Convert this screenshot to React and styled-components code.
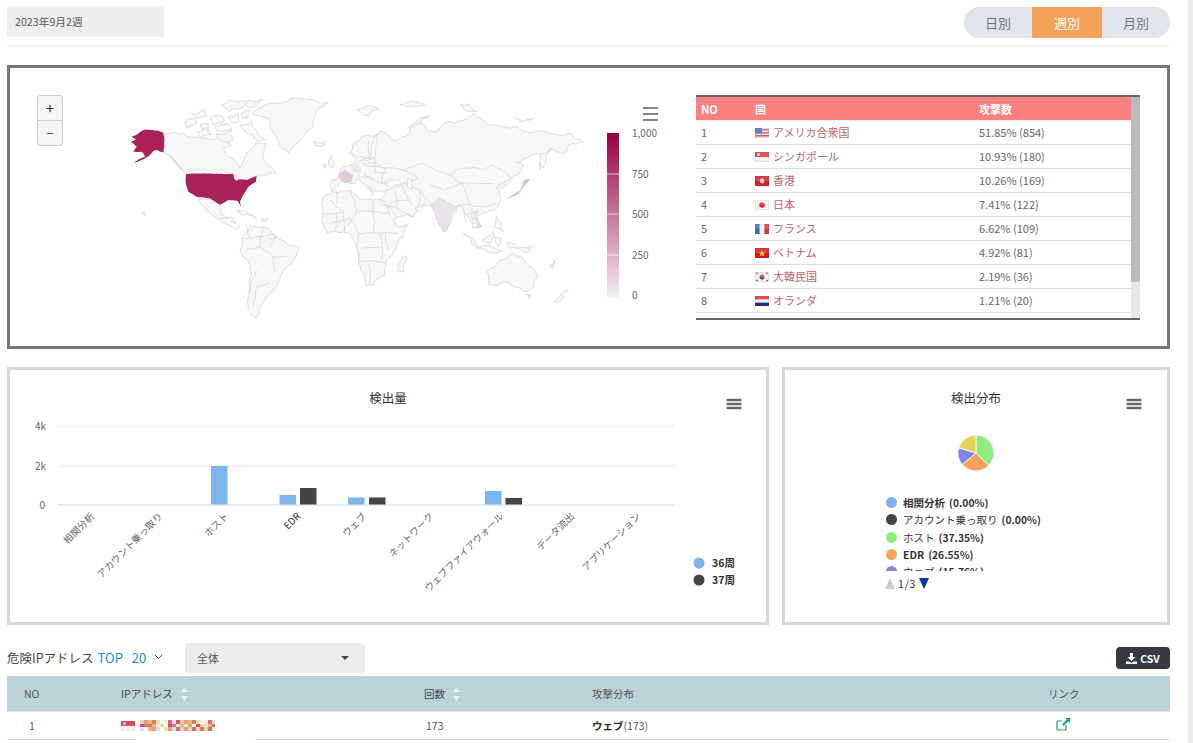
import React from "react";
import styled, { createGlobalStyle } from "styled-components";

const GlobalStyle = createGlobalStyle`
  html, body {
    margin: 0;
    padding: 0;
    background: #fff;
    overflow: hidden;
    font-family: "Noto Sans CJK JP", "Noto Sans", sans-serif;
    color: #555;
  }
`;

const Page = styled.div`
  display: flex;
  width: 1193px;
  height: 743px;
  overflow: hidden;
`;
const Main = styled.div`
  width: 1163px;
  padding: 7px 18px 0 7px;
  flex: none;
`;
const PageScroll = styled.div`
  width: 5px;
  background: #ececec;
`;

const TopBar = styled.div`
  display: flex;
  justify-content: space-between;
  align-items: flex-start;
  height: 39px;
  border-bottom: 1px solid #eee;
  margin-bottom: 18px;
`;
const DateBox = styled.div`
  width: 149px;
  height: 30px;
  padding-left: 8px;
  background: #eee;
  font-size: 10.7px;
  line-height: 30px;
  color: #555;
`;
const Segments = styled.div`
  display: flex;
  height: 31px;
  width: 206px;
  border-radius: 16px;
  overflow: hidden;
  background: #e0e5ec;
`;
const Segment = styled.div`
  flex: ${(p) => p.$grow};
  text-align: center;
  font-size: 13px;
  line-height: 32px;
  background: ${(p) => (p.$active ? "#f4a25a" : "transparent")};
  color: ${(p) => (p.$active ? "#fff" : "#6c757d")};
`;

const MapPanel = styled.section`
  position: relative;
  box-sizing: border-box;
  height: 284px;
  border: 3px solid #777;
  display: flex;
  justify-content: flex-end;
  padding: 27px 27px 0 0;
  margin-bottom: 18px;
`;
const MapCanvas = styled.svg`
  position: absolute;
  left: -10px;
  top: -68px;
  width: 680px;
  height: 400px;
  pointer-events: none;
`;
const ZoomGroup = styled.div`
  position: absolute;
  left: 27px;
  top: 27px;
  width: 24px;
  border: 1px solid #ccc;
  border-radius: 3px;
  background: #f5f5f5;
`;
const ZoomButton = styled.div`
  height: 24px;
  line-height: 24px;
  text-align: center;
  font-size: ${(p) => p.$size}px;
  color: #333;
  & + & {
    border-top: 1px solid #ccc;
  }
`;
const TableBox = styled.div`
  position: relative;
  width: 444px;
  height: 225px;
  box-sizing: border-box;
  border-top: 2px solid #666;
  border-bottom: 2px solid #666;
  overflow: hidden;
`;
const TableInner = styled.div`
  width: 435px;
`;
const CountryHead = styled.div`
  display: grid;
  grid-template-columns: 54px 224px 1fr;
  height: 23px;
  line-height: 24px;
  padding-left: 5px;
  background: #fd8080;
  border-bottom: 1px solid #eee;
  color: #fff;
  font-size: 11px;
  font-weight: 700;
`;
const CountryRow = styled.div`
  display: grid;
  grid-template-columns: 54px 224px 1fr;
  height: 23px;
  line-height: 23px;
  padding-left: 5px;
  border-bottom: 1px solid #ddd;
  font-size: 11px;
  color: #666;
`;
const CountryName = styled.div`
  display: flex;
  align-items: center;
  gap: 4px;
  color: #c0646c;
`;
const Thumb = styled.div`
  position: absolute;
  right: 0;
  top: 0;
  bottom: 0;
  width: 9px;
  background: linear-gradient(#bbb 0 83.5%, #e8e8e8 83.5% 100%);
`;

const ChartRow = styled.div`
  display: grid;
  grid-template-columns: 762px 388px;
  gap: 13px;
  margin-bottom: 18px;
`;
const ChartPanel = styled.section`
  position: relative;
  box-sizing: border-box;
  height: 258px;
  border: 3px solid #d8d8d8;
  overflow: hidden;
`;
const ChartTitle = styled.h3`
  margin: 0;
  padding-top: 18px;
  text-align: center;
  font-size: 12.5px;
  line-height: 20px;
  font-weight: 400;
  color: #333;
`;
const MenuIcon = styled.svg`
  position: absolute;
  top: ${(p) => p.$top}px;
  right: ${(p) => p.$right}px;
  width: 16px;
  height: 12px;
`;
const BarSvg = styled.svg`
  position: absolute;
  left: 0;
  top: 0;
  width: 756px;
  height: 252px;
`;
const PieSvg = styled.svg`
  display: block;
  margin: 26px auto 0;
  width: 38px;
  height: 38px;
`;
const PieLegend = styled.div`
  margin: 22px 0 0 101px;
  height: 77px;
  overflow: hidden;
`;
const PieItem = styled.div`
  display: flex;
  align-items: center;
  gap: 6px;
  height: 17.3px;
  font-size: 10.3px;
  font-weight: 700;
  color: #333;
  white-space: nowrap;
`;
const Dot = styled.span`
  width: 11px;
  height: 11px;
  border-radius: 50%;
  background: ${(p) => p.$color};
`;
const ItemName = styled.span`
  font-size: 10.5px;
  font-weight: ${(p) => (p.$thin ? 400 : 700)};
  margin-right: 4px;
`;
const Pager = styled.div`
  display: flex;
  align-items: center;
  gap: 3px;
  margin: 5px 0 0 100px;
  font-size: 10.5px;
  letter-spacing: 0.8px;
  color: #333;
`;
const Tri = styled.span`
  width: 0;
  height: 0;
  border-left: 5.5px solid transparent;
  border-right: 5.5px solid transparent;
  border-${(p) => (p.$down ? "top" : "bottom")}: 11px solid ${(p) => p.$color};
`;

const IpHeader = styled.div`
  display: flex;
  align-items: center;
  height: 30px;
  margin-bottom: 3px;
`;
const IpTitle = styled.div`
  font-size: 12.5px;
  color: #444;
  width: 178px;
  display: flex;
  align-items: center;
  white-space: nowrap;
  padding-bottom: 2px;
  box-sizing: border-box;
`;
const Top = styled.span`
  color: #1a8ccc;
  margin-left: 4px;
  word-spacing: 6px;
  font-size: 13px;
`;
const Select = styled.div`
  display: flex;
  justify-content: space-between;
  align-items: center;
  box-sizing: border-box;
  width: 180px;
  height: 30px;
  padding: 0 16px 0 12px;
  border-radius: 4px;
  background: #ebecee;
  font-size: 11px;
  color: #555;
`;
const CsvButton = styled.div`
  display: flex;
  align-items: center;
  justify-content: center;
  gap: 3px;
  margin-left: auto;
  width: 54px;
  height: 22px;
  border-radius: 4px;
  background: #343a40;
  color: #fff;
  font-size: 10.5px;
  font-weight: 700;
`;
const IpGrid = styled.div`
  position: relative;
  box-sizing: border-box;
  display: grid;
  grid-template-columns: 114px 303px 168px 456px 1fr;
  align-items: center;
  height: ${(p) => p.$h}px;
  background: ${(p) => p.$bg || "transparent"};
  border-bottom: 1px solid ${(p) => p.$line};
  font-size: 10.5px;
  color: #555;
`;
const NoCell = styled.div`
  padding-left: ${(p) => p.$pad}px;
`;
const SortCell = styled.div`
  display: flex;
  align-items: center;
  gap: 8px;
  color: #444;
`;
const IpCell = styled.div`
  display: flex;
  align-items: center;
  gap: 5px;
`;
const Bold = styled.b`
  color: #222;
`;
const Mask = styled.div`
  position: absolute;
  left: 129px;
  bottom: -1px;
  width: 119px;
  height: 2px;
  background: #fff;
`;

// breaks straight polygon edges into irregular coastlines, same result every render
const wobble = (seed) => {
  const v = Math.sin(seed * 12.9898) * 43758.5453;
  return v - Math.floor(v) - 0.5;
};
const rough = (d, amp = 0.3) =>
  d
    .match(/M[^M]*/g)
    .map((sub) => {
      const nums = sub.match(/-?\d+(\.\d+)?/g).map(Number);
      const pts = [];
      for (let i = 0; i < nums.length; i += 2) pts.push([nums[i], nums[i + 1]]);
      const closed = /Z/.test(sub);
      if (closed) pts.push(pts[0]);
      const out = [pts[0]];
      const split = (a, b) => {
        const dx = b[0] - a[0];
        const dy = b[1] - a[1];
        const len = Math.hypot(dx, dy);
        if (len < 7) {
          out.push(b);
          return;
        }
        const n = wobble(a[0] * 3.1 + b[1] * 7.7 + a[1] + b[0] * 0.3) * amp;
        const mid = [(a[0] + b[0]) / 2 - dy * n, (a[1] + b[1]) / 2 + dx * n];
        split(a, mid);
        split(mid, b);
      };
      for (let i = 1; i < pts.length; i++) split(pts[i - 1], pts[i]);
      return "M" + out.map((p) => `${p[0].toFixed(1)} ${p[1].toFixed(1)}`).join("L") + (closed ? "Z" : "");
    })
    .join("");

/* world map, drawn in two local frames read off the screenshot at 3x */
const ALASKA =
  "M95 140L130 120L190 128L190 187L170 180L160 183L150 195L125 210L90 228L135 200L125 185L100 185L110 170L92 155L108 148Z";
const USA =
  "M258 252L400 252L403 266L410 272L418 268L440 270L470 258L468 275L445 290L430 315L420 335L423 350L412 332L385 330L360 345L330 325L290 320L265 305L257 280Z";
const LAND_WEST = [
  "M190 128L250 130L300 145L330 150L370 150L395 165L370 175L385 200L420 235L435 200L450 180L470 155L495 160L490 210L530 250L500 255L470 258L440 270L415 268L400 252L258 252L240 230L210 195L190 187Z",
  "M455 70L510 40L570 25L640 30L685 38L650 60L640 110L600 150L565 190L540 170L520 130L510 90L460 75Z",
  "M640 155L675 155L670 168L645 168Z",
  "M255 95L285 85L290 100L262 115Z",
  "M275 70L312 60L322 80L290 84Z",
  "M365 45L400 30L440 35L425 55L390 65Z",
  "M445 30L490 28L460 52L440 50Z",
  "M330 85L365 78L372 95L340 105Z",
  "M345 110L385 100L395 125L350 122Z",
  "M385 80L415 72L418 95L395 98Z",
  "M420 105L455 95L495 150L470 150L440 130Z",
  "M290 125L325 118L335 135L300 140Z",
  "M350 130L385 128L400 150L360 150Z",
  "M300 105L325 100L325 115L305 117Z",
  "M425 70L450 62L445 82L428 85Z",
  "M290 320L330 325L360 345L365 375L395 380L420 410L410 420L385 405L345 380L310 350L295 325Z",
  "M425 445L450 405L490 410L530 440L595 470L590 495L550 540L530 590L490 640L470 685L450 670L445 610L455 550L420 480Z",
  "M410 362L450 372L470 385L430 375Z",
  "M485 385L505 385L500 395L485 393Z",
  "M128 365L138 372L135 377Z",
  "M500 435L530 437L525 445L505 445Z",
];
const WEST_BORDERS =
  "M440 405L450 445L425 445M490 410L480 470L440 480M480 470L520 500L525 545M470 540L445 610M520 430L525 445M510 580L470 590M355 385L385 385M392 395L410 400M450 445L490 440M530 440L510 470M520 500L560 500M470 590L460 650";
const LAND_EAST = [
  "M60 190L95 140L150 122L185 150L200 150L240 130L235 110L285 80L300 78L270 95L290 120L320 125L360 95L430 70L470 100L560 110L640 125L720 130L760 155L715 165L700 195L660 175L630 240L640 200L620 190L560 215L580 225L565 255L530 285L500 295L515 330L500 355L450 375L440 385L455 410L430 415L410 375L385 345L350 420L340 425L305 345L265 360L250 380L175 395L150 340L170 300L115 290L130 315L110 290L85 265L75 280L40 275L5 305L0 280L30 250L30 240L60 225L80 210Z",
  "M-25 345L-20 320L10 305L60 300L85 320L130 330L165 335L185 370L205 410L235 405L205 450L190 490L170 510L165 555L130 585L105 585L95 545L85 515L80 470L60 430L20 425L-10 430L-25 395Z",
  "M220 497L230 500L222 545L205 545L207 520Z",
  "M470 545L510 510L545 490L575 500L590 520L622 555L610 590L590 605L555 590L530 575L480 585Z",
  "M590 612L603 615L598 626Z",
  "M672 635L700 605L715 600L690 635Z",
  "M80 60L125 45L145 55L115 78Z",
  "M240 115L265 85L300 78L270 95Z",
  "M-5 220L5 195L15 225L5 235Z",
  "M-25 225L-12 222L-15 235Z",
  "M400 430L445 475L425 462Z",
  "M440 475L520 482L480 488Z",
  "M455 450L490 425L480 460Z",
  "M495 440L515 445L505 470Z",
  "M500 380L520 425L495 410Z",
  "M530 460L610 465L590 490L540 475Z",
  "M630 195L665 175L640 235Z",
  "M390 45L415 42L440 65L410 62Z",
  "M210 45L285 42L240 50Z",
  "M555 85L610 85L580 95Z",
  "M660 530L675 510L670 535Z",
];
// inland seas cut out of the land mass
const SEAS = [
  "M118 205L125 165L145 130L138 170L135 200Z",
  "M95 212L135 205L130 218L100 222Z",
  "M165 282L205 270L215 285L178 292Z",
  "M232 265L245 270L246 300L233 292Z",
  "M255 355L285 340L268 362Z",
  "M180 345L200 385L190 388L175 360Z",
];
const EAST_BORDERS =
  "M60 190L120 205L115 150M115 205L165 235L155 280M120 260L155 280L215 285M85 260L120 260M100 225L165 235M165 235L220 240L265 265L220 280L270 300L305 345M220 240L275 220L360 255L390 235L460 240L490 225L545 265L500 290M360 255L395 280L490 280M300 285L340 300L395 280L420 345L470 350L500 340M270 300L265 350M385 345L420 345M150 340L250 380M215 285L245 345M60 300L80 365L130 365L130 330M80 365L40 420M130 365L190 370M130 365L130 430L85 430L85 515M130 430L205 430M150 430L155 510M85 515L165 520M115 520L120 585M0 330L40 365M-20 370L40 365M425 355L430 395L455 410M20 300L20 340M135 205L135 250M90 230L85 260M100 250L130 270M130 245L175 250M155 280L190 265M85 215L130 200M170 300L215 285M180 340L235 330M195 300L200 350M0 400L60 385M20 370L15 425M165 430L175 480M100 475L155 470M60 385L85 430M40 365L45 430M410 375L445 360M395 345L410 400";
const JAPAN = "M533 325L572 300L582 270L600 266L580 292L566 312Z";
const INDIA = "M305 345L330 325L375 350L390 345L365 370L350 420L340 425L320 385Z";
const FRANCE = "M25 250L45 240L70 255L65 275L45 280L30 270Z";
const GERMANY = "M60 225L85 220L95 245L70 250Z";
const VIETNAM = "M430 365L447 365L432 385L455 408L440 415L445 395Z";

const WorldMap = () => (
  <MapCanvas viewBox="0 0 680 400">
    <defs>
      <linearGradient id="ramp" x1="0" y1="0" x2="0" y2="1">
        <stop offset="0" stopColor="#99003f" />
        <stop offset="1" stopColor="#f3eef5" />
      </linearGradient>
    </defs>
    <g transform="translate(100 90) scale(0.3333)" stroke="#d6d6d6" fill="#f7f7f7">
      {LAND_WEST.map((d) => (
        <path key={d} d={rough(d)} strokeWidth="2.6" />
      ))}
      <path d={rough(WEST_BORDERS, 0.14)} fill="none" strokeWidth="2.4" />
      <path d={rough(ALASKA, 0.12)} fill="#a8215a" stroke="none" />
      <path d={rough(USA, 0.04)} fill="#a8215a" stroke="none" />
      <path d="M205 188L240 235L250 248L228 215Z" fill="#c4c4c4" stroke="none" />
    </g>
    <g transform="translate(330 90) scale(0.3333)" stroke="#d6d6d6" fill="#f7f7f7">
      {LAND_EAST.map((d) => (
        <path key={d} d={rough(d)} strokeWidth="2.6" />
      ))}
      <path d={rough(EAST_BORDERS, 0.14)} fill="none" strokeWidth="2.4" />
      {SEAS.map((d) => (
        <path key={d} d={rough(d, 0.2)} fill="#fff" strokeWidth="2.4" />
      ))}
      <path d={rough(INDIA, 0.1)} fill="#eae3ed" strokeWidth="2.4" />
      <path d={rough(FRANCE, 0.1)} fill="#e3cbdc" stroke="none" />
      <path d={rough(GERMANY, 0.1)} fill="#eee8f1" stroke="none" />
      <path d={rough(VIETNAM, 0.1)} fill="#e9dfe9" strokeWidth="2" />
      <path d={rough(JAPAN, 0.1)} fill="#e0c0cf" strokeWidth="2" />
    </g>
    <rect x="607" y="133" width="12" height="164" fill="url(#ramp)" />
    {[174, 214, 255].map((y) => (
      <line key={y} x1="607" x2="619" y1={y} y2={y} stroke="#fff" strokeOpacity="0.7" />
    ))}
    <g fontSize="10" fill="#666" fontFamily="'Noto Sans CJK JP', sans-serif">
      <text x="632" y="137">1,000</text>
      <text x="632" y="178">750</text>
      <text x="632" y="218">500</text>
      <text x="632" y="259">250</text>
      <text x="632" y="299">0</text>
    </g>
    <g stroke="#666" strokeWidth="1.6">
      <line x1="643" x2="658" y1="108" y2="108" />
      <line x1="643" x2="658" y1="114" y2="114" />
      <line x1="643" x2="658" y1="120" y2="120" />
    </g>
  </MapCanvas>
);

const FLAGS = {
  us: (
    <>
      <rect width="14" height="10" fill="#e6e6ee" />
      {[1, 4, 7].map((y) => (
        <rect key={y} y={y} width="14" height="1.5" fill="#d0605a" />
      ))}
      <rect width="7" height="5.5" fill="#4a6fb5" />
    </>
  ),
  sg: (
    <>
      <rect width="14" height="10" fill="#f2f2f2" />
      <rect width="14" height="5" fill="#e5303a" />
      <circle cx="3.5" cy="2.5" r="1.5" fill="#fbdede" />
    </>
  ),
  hk: (
    <>
      <rect width="14" height="10" fill="#d81e26" />
      <circle cx="7" cy="5" r="2.4" fill="#f6c6c6" />
    </>
  ),
  jp: (
    <>
      <rect width="14" height="10" fill="#f5f5f5" />
      <circle cx="7" cy="5" r="2.8" fill="#e8262c" />
    </>
  ),
  fr: (
    <>
      <rect width="14" height="10" fill="#f2f2f2" />
      <rect width="4.6" height="10" fill="#4668b4" />
      <rect x="9.4" width="4.6" height="10" fill="#e3343a" />
    </>
  ),
  vn: (
    <>
      <rect width="14" height="10" fill="#e0141c" />
      <polygon points="7,2 8,4.4 10.4,4.4 8.5,6 9.2,8.3 7,7 4.8,8.3 5.5,6 3.6,4.4 6,4.4" fill="#f8d830" />
    </>
  ),
  kr: (
    <>
      <rect width="14" height="10" fill="#eeeeee" />
      <circle cx="7" cy="5" r="2.4" fill="#d6404a" />
      <path d="M4.6 5a2.4 2.4 0 0 0 4.8 0z" fill="#3b55a0" />
      <path d="M1 2l2-1.2M1 8l2 1.2M13 2l-2-1.2M13 8l-2 1.2" stroke="#444" strokeWidth="1" />
    </>
  ),
  nl: (
    <>
      <rect width="14" height="10" fill="#f2f2f2" />
      <rect width="14" height="3.4" fill="#d8343c" />
      <rect y="6.6" width="14" height="3.4" fill="#1c3578" />
    </>
  ),
};

const Flag = ({ code }) => (
  <svg width="14" height="10" viewBox="0 0 14 10">
    {FLAGS[code]}
    <rect width="14" height="5" fill="#fff" opacity="0.14" />
    <rect x="0.25" y="0.25" width="13.5" height="9.5" fill="none" stroke="#000" strokeOpacity="0.12" strokeWidth="0.5" />
  </svg>
);

const COUNTRIES = [
  ["us", "アメリカ合衆国", "51.85% (854)"],
  ["sg", "シンガポール", "10.93% (180)"],
  ["hk", "香港", "10.26% (169)"],
  ["jp", "日本", "7.41% (122)"],
  ["fr", "フランス", "6.62% (109)"],
  ["vn", "ベトナム", "4.92% (81)"],
  ["kr", "大韓民国", "2.19% (36)"],
  ["nl", "オランダ", "1.21% (20)"],
];

const BARS = [
  [211, 466, "#7cb5ec"],
  [279.5, 495, "#7cb5ec"],
  [300, 488, "#434348"],
  [348, 497.5, "#7cb5ec"],
  [369, 497.5, "#434348"],
  [485, 491, "#7cb5ec"],
  [505.5, 498, "#434348"],
];
const AXIS_LABELS = [
  ["相関分析", 95],
  ["アカウント乗っ取り", 163],
  ["ホスト", 229],
  ["EDR", 301],
  ["ウェブ", 367],
  ["ネットワーク", 434],
  ["ウェブファイアウォール", 504],
  ["データ流出", 575],
  ["アプリケーション", 641],
];

const Burger = ({ top, right }) => (
  <MenuIcon $top={top} $right={right} viewBox="0 0 16 12">
    <g stroke="#666" strokeWidth="2.4" strokeLinecap="round">
      <line x1="1.5" x2="14.5" y1="2" y2="2" />
      <line x1="1.5" x2="14.5" y1="6" y2="6" />
      <line x1="1.5" x2="14.5" y1="10" y2="10" />
    </g>
  </MenuIcon>
);

// svg frame starts at the panel's inner corner (page 10,370)
const BarChart = () => (
  <BarSvg viewBox="10 370 756 252">
    <line x1="58" x2="675" y1="426" y2="426" stroke="#eee" />
    <line x1="58" x2="675" y1="466" y2="466" stroke="#e8e8ee" />
    <line x1="58" x2="675" y1="505" y2="505" stroke="#dfe3ea" strokeWidth="1.5" />
    {BARS.map(([x, y, color]) => (
      <rect key={x} x={x} y={y} width="16.5" height={504.5 - y} fill={color} />
    ))}
    <g fontFamily="'Noto Sans CJK JP', sans-serif" fontSize="10" fill="#666">
      <text x="46" y="430" textAnchor="end">4k</text>
      <text x="46" y="470" textAnchor="end">2k</text>
      <text x="45" y="509" textAnchor="end">0</text>
      {AXIS_LABELS.map(([label, x]) => (
        <text
          key={label}
          x={x}
          y="517"
          textAnchor="end"
          fontSize="9.7"
          fill={label === "EDR" ? "#222" : "#666"}
          transform={`rotate(-45 ${x} 517)`}
        >
          {label}
        </text>
      ))}
    </g>
    <circle cx="699" cy="563" r="5.5" fill="#7cb5ec" />
    <circle cx="699" cy="580" r="5.5" fill="#434348" />
    <g fontFamily="'Noto Sans CJK JP', sans-serif" fontSize="10.5" fontWeight="700" fill="#333">
      <text x="712" y="567">36周</text>
      <text x="712" y="584">37周</text>
    </g>
  </BarSvg>
);

const PIE = [
  [37.35, "#90ed7d"],
  [26.55, "#f7a35c"],
  [15.76, "#8085e9"],
  [20.34, "#e4d354"],
];

const pieSlices = () => {
  let start = 0;
  return PIE.map(([pct, color]) => {
    const a0 = (start / 100) * 2 * Math.PI;
    start += pct;
    const a1 = (start / 100) * 2 * Math.PI;
    const big = pct > 50 ? 1 : 0;
    const d = `M19 19L${19 + 18 * Math.sin(a0)} ${19 - 18 * Math.cos(a0)}A18 18 0 ${big} 1 ${19 + 18 * Math.sin(a1)} ${19 - 18 * Math.cos(a1)}Z`;
    return <path key={color} d={d} fill={color} stroke="#fff" strokeWidth="0.8" />;
  });
};

const PIE_LEGEND = [
  ["#7cb5ec", "相関分析", "(0.00%)", false],
  ["#434348", "アカウント乗っ取り", "(0.00%)", true],
  ["#90ed7d", "ホスト", "(37.35%)", true],
  ["#f7a35c", "EDR", "(26.55%)", false],
  ["#8085e9", "ウェブ", "(15.76%)", true],
];

const MOSAIC = ["#f2d39a", "#d9786e", "#fbeee0", "#c9566a", "#eeb974", "#fff", "#d5dff6", "#e69c80", "#f6dea8", "#d0707e"];

const Mosaic = () => (
  <svg width="75" height="11" viewBox="0 0 75 11" shapeRendering="crispEdges">
    {Array.from({ length: 19 * 3 }, (_, i) => {
      const col = i % 19;
      const row = Math.floor(i / 19);
      if (col === 6 && row === 1) return null;
      return (
        <rect
          key={i}
          x={col * 4}
          y={row * 3.7}
          width="4"
          height="3.7"
          fill={MOSAIC[(col * 7 + row * 3 + (col % 3) * row) % MOSAIC.length]}
        />
      );
    })}
  </svg>
);

const App = () => (
  <>
    <GlobalStyle />
    <Page>
      <Main>
        <TopBar>
          <DateBox>2023年9月2週</DateBox>
          <Segments>
            <Segment $grow="68">日別</Segment>
            <Segment $grow="70" $active>週別</Segment>
            <Segment $grow="68">月別</Segment>
          </Segments>
        </TopBar>

        <MapPanel>
          <WorldMap />
          <ZoomGroup>
            <ZoomButton $size={15}>+</ZoomButton>
            <ZoomButton $size={12}>−</ZoomButton>
          </ZoomGroup>
          <TableBox>
            <TableInner>
              <CountryHead>
                <div>NO</div>
                <div>国</div>
                <div>攻撃数</div>
              </CountryHead>
              {COUNTRIES.map(([code, name, count], i) => (
                <CountryRow key={code}>
                  <div>{i + 1}</div>
                  <CountryName>
                    <Flag code={code} />
                    {name}
                  </CountryName>
                  <div>{count}</div>
                </CountryRow>
              ))}
            </TableInner>
            <Thumb />
          </TableBox>
        </MapPanel>

        <ChartRow>
          <ChartPanel>
            <BarChart />
            <ChartTitle>検出量</ChartTitle>
            <Burger top={28} right={24} />
          </ChartPanel>
          <ChartPanel>
            <ChartTitle>検出分布</ChartTitle>
            <Burger top={28} right={25} />
            <PieSvg viewBox="0 0 38 38">{pieSlices()}</PieSvg>
            <PieLegend>
              {PIE_LEGEND.map(([color, name, pct, thin]) => (
                <PieItem key={name}>
                  <Dot $color={color} />
                  <span>
                    <ItemName $thin={thin}>{name}</ItemName>
                    {pct}
                  </span>
                </PieItem>
              ))}
            </PieLegend>
            <Pager>
              <Tri $color="#ccc" />
              1/3
              <Tri $down $color="#003399" />
            </Pager>
          </ChartPanel>
        </ChartRow>

        <IpHeader>
          <IpTitle>
            危険IPアドレス
            <Top>TOP 20</Top>
            <svg width="9" height="6" viewBox="0 0 9 6" style={{ marginLeft: 8 }}>
              <path d="M1 1l3.5 3.5L8 1" fill="none" stroke="#555" />
            </svg>
          </IpTitle>
          <Select>
            全体
            <svg width="8" height="4" viewBox="0 0 8 4">
              <path d="M0 0h8L4 4z" fill="#444" />
            </svg>
          </Select>
          <CsvButton>
            <svg width="11" height="11" viewBox="0 0 11 11">
              <path d="M4 0h3v4h2.5L5.5 8 1.5 4H4zM0 8.5h3.5l2 1.5 2-1.5H11V11H0z" fill="#fff" />
            </svg>
            CSV
          </CsvButton>
        </IpHeader>

        <IpGrid $h={36} $bg="#bbd2da" $line="#dde">
          <NoCell $pad={17}>NO</NoCell>
          <SortCell>
            IPアドレス
            <svg width="7" height="14" viewBox="0 0 7 14">
              <path d="M3.5 0L7 5H0zM0 9h7l-3.5 5z" fill="#e9f0f3" />
            </svg>
          </SortCell>
          <SortCell>
            回数
            <svg width="7" height="14" viewBox="0 0 7 14">
              <path d="M3.5 0L7 5H0zM0 9h7l-3.5 5z" fill="#e9f0f3" />
            </svg>
          </SortCell>
          <div>攻撃分布</div>
          <div>リンク</div>
        </IpGrid>
        <IpGrid $h={28} $line="#ddd">
          <NoCell $pad={22}>1</NoCell>
          <IpCell>
            <Flag code="sg" />
            <Mosaic />
          </IpCell>
          <NoCell $pad={2}>173</NoCell>
          <div>
            <Bold>ウェブ</Bold>(173)
          </div>
          <NoCell $pad={8}>
            <svg width="14" height="13" viewBox="0 0 14 13">
              <path d="M10 7v4a1 1 0 0 1-1 1H2a1 1 0 0 1-1-1V4a1 1 0 0 1 1-1h4" fill="none" stroke="#1a9a7e" strokeWidth="1.2" />
              <path d="M9 0h5v5l-1.800-1.800L7.500 8 6 6.500l4.800-4.700z" fill="#1a9a7e" />
            </svg>
          </NoCell>
          <Mask />
        </IpGrid>
      </Main>
      <PageScroll />
    </Page>
  </>
);

export default App;
